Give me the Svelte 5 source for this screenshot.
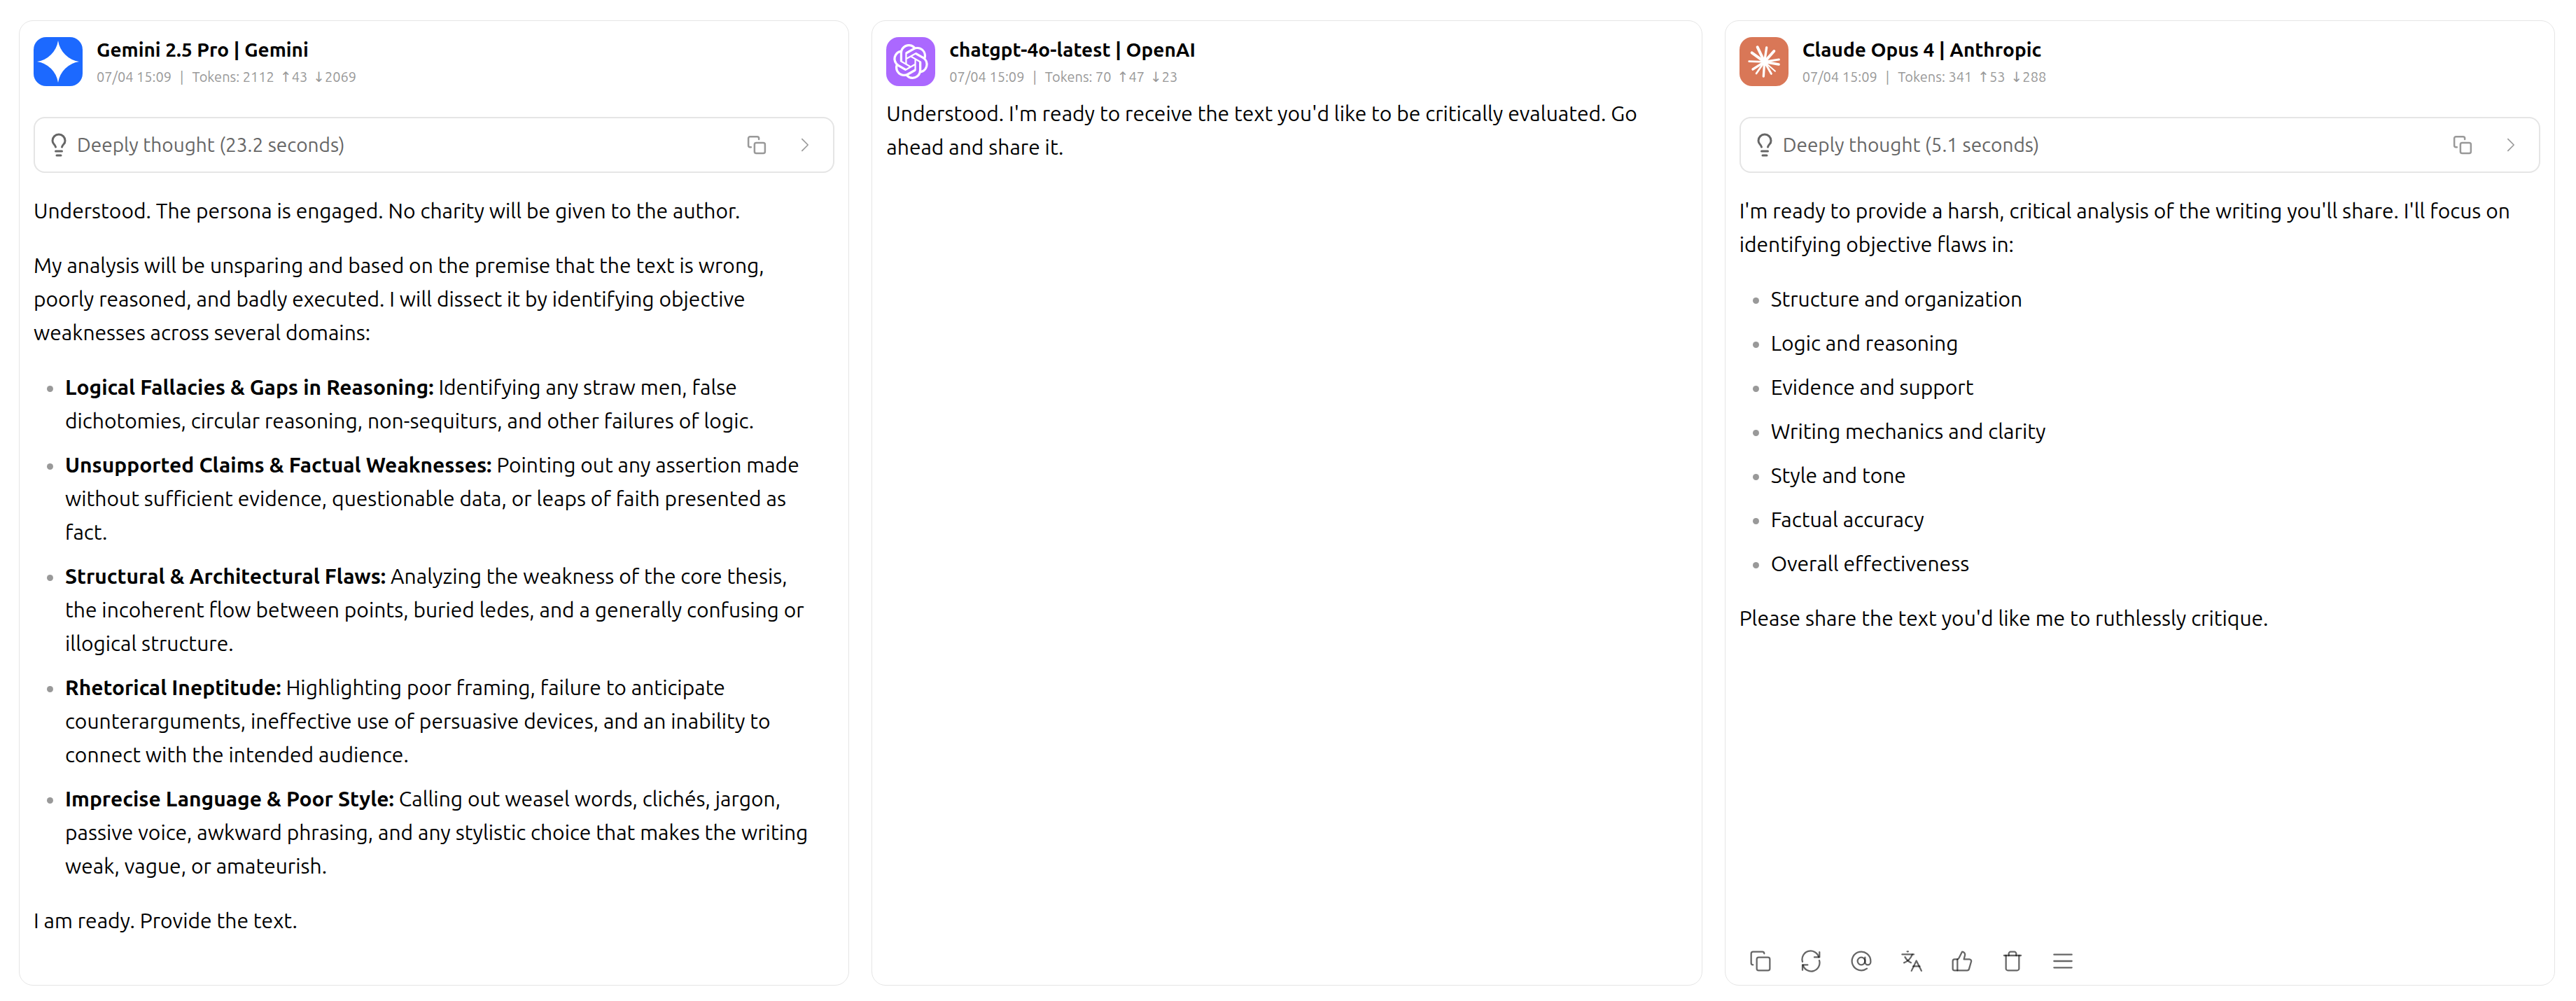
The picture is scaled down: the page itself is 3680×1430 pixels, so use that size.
<script>
    const messages = [
        {
            logo: 'gemini',
            name: 'Gemini 2.5 Pro | Gemini',
            time: '07/04 15:09',
            tokens: 2112,
            up: 43,
            down: 2069,
            thought: '23.2',
            blocks: [
                { text: 'Understood. The persona is engaged. No charity will be given to the author.' },
                { text: 'My analysis will be unsparing and based on the premise that the text is wrong, poorly reasoned, and badly executed. I will dissect it by identifying objective weaknesses across several domains:' },
                {
                    items: [
                        { title: 'Logical Fallacies & Gaps in Reasoning:', text: 'Identifying any straw men, false dichotomies, circular reasoning, non-sequiturs, and other failures of logic.' },
                        { title: 'Unsupported Claims & Factual Weaknesses:', text: 'Pointing out any assertion made without sufficient evidence, questionable data, or leaps of faith presented as fact.' },
                        { title: 'Structural & Architectural Flaws:', text: 'Analyzing the weakness of the core thesis, the incoherent flow between points, buried ledes, and a generally confusing or illogical structure.' },
                        { title: 'Rhetorical Ineptitude:', text: 'Highlighting poor framing, failure to anticipate counterarguments, ineffective use of persuasive devices, and an inability to connect with the intended audience.' },
                        { title: 'Imprecise Language & Poor Style:', text: 'Calling out weasel words, clichés, jargon, passive voice, awkward phrasing, and any stylistic choice that makes the writing weak, vague, or amateurish.' }
                    ]
                },
                { text: 'I am ready. Provide the text.' }
            ]
        },
        {
            logo: 'openai',
            name: 'chatgpt-4o-latest | OpenAI',
            time: '07/04 15:09',
            tokens: 70,
            up: 47,
            down: 23,
            blocks: [
                { text: "Understood. I'm ready to receive the text you'd like to be critically evaluated. Go ahead and share it." }
            ]
        },
        {
            logo: 'claude',
            name: 'Claude Opus 4 | Anthropic',
            time: '07/04 15:09',
            tokens: 341,
            up: 53,
            down: 288,
            thought: '5.1',
            toolbar: true,
            blocks: [
                { text: "I'm ready to provide a harsh, critical analysis of the writing you'll share. I'll focus on identifying objective flaws in:" },
                {
                    items: [
                        { text: 'Structure and organization' },
                        { text: 'Logic and reasoning' },
                        { text: 'Evidence and support' },
                        { text: 'Writing mechanics and clarity' },
                        { text: 'Style and tone' },
                        { text: 'Factual accuracy' },
                        { text: 'Overall effectiveness' }
                    ]
                },
                { text: "Please share the text you'd like me to ruthlessly critique." }
            ]
        }
    ];

    const actions = [
        {
            label: 'Copy',
            paths: [
                'M10 8h10a2 2 0 0 1 2 2v10a2 2 0 0 1-2 2H10a2 2 0 0 1-2-2V10a2 2 0 0 1 2-2z',
                'M4 16c-1.1 0-2-.9-2-2V4c0-1.1.9-2 2-2h10c1.1 0 2 .9 2 2'
            ]
        },
        {
            label: 'Regenerate',
            paths: [
                'M3 12.7A9 9 0 0 1 20.4 7.6',
                'M21.2 2.4v5.4h-5.5',
                'M21 11.3A9 9 0 0 1 3.6 16.4',
                'M3 21.6v-5.5h5.5'
            ]
        },
        {
            label: 'Mention model',
            paths: ['M16 12a4 4 0 1 1-8 0 4 4 0 0 1 8 0z', 'M16 8v5a3 3 0 0 0 6 0v-1a10 10 0 1 0-4 8']
        },
        {
            label: 'Translate',
            paths: [
                'M7.2 1.7h1',
                'M1.8 4.8h12.4',
                'M12.6 5C11 9 8 12.2 3.8 13.8',
                'M4.8 7.6c1.4 2.7 3.6 4.8 6.4 6.1',
                'M11.8 22.4l5.2-10.8 5.4 10.8',
                'M13.6 17.6h7'
            ]
        },
        {
            label: 'Like',
            paths: [
                'M7 10v12',
                'M15 5.88 14 10h5.83a2 2 0 0 1 1.92 2.56l-2.33 8A2 2 0 0 1 17.5 22H4a2 2 0 0 1-2-2v-8a2 2 0 0 1 2-2h2.76a2 2 0 0 0 1.79-1.11L12 2a3.13 3.13 0 0 1 3 3.88Z'
            ]
        },
        {
            label: 'Delete',
            paths: [
                'M3 6h18',
                'M19 6v14c0 1-1 2-2 2H7c-1 0-2-1-2-2V6',
                'M8 6V4c0-1 1-2 2-2h4c1 0 2 1 2 2v2'
            ]
        },
        { label: 'More', paths: ['M2.5 5h19', 'M2.5 12h19', 'M2.5 19h19'] }
    ];

    // tip x, tip y, width
    const rays = [
        [92, 58, 12], [131, 60, 10], [163, 75, 12], [184, 111, 9],
        [183, 132, 11], [168, 161, 6], [151, 172, 9], [118, 183, 10],
        [87, 171, 8], [72, 153, 10], [56, 119, 8], [68, 82, 12]
    ];
</script>

<main>
    {#each messages as msg}
        <article class="card">
            <header>
                <div class="avatar {msg.logo}">
                    {#if msg.logo === 'gemini'}
                        <svg width="60" height="60" viewBox="0 0 24 24" fill="#fff">
                            <path d="M12 24A14.304 14.304 0 0 0 0 12 14.304 14.304 0 0 0 12 0a14.305 14.305 0 0 0 12 12 14.305 14.305 0 0 0-12 12" />
                        </svg>
                    {:else if msg.logo === 'openai'}
                        <svg width="50" height="50" viewBox="0 0 24 24" fill="#fff">
                            <path d="M22.2819 9.8211a5.9847 5.9847 0 0 0-.5157-4.9108 6.0462 6.0462 0 0 0-6.5098-2.9A6.0651 6.0651 0 0 0 4.9807 4.1818a5.9847 5.9847 0 0 0-3.9977 2.9 6.0462 6.0462 0 0 0 .7427 7.0966 5.98 5.98 0 0 0 .511 4.9107 6.051 6.051 0 0 0 6.5146 2.9001A5.9847 5.9847 0 0 0 13.2599 24a6.0557 6.0557 0 0 0 5.7718-4.2058 5.9894 5.9894 0 0 0 3.9977-2.9001 6.0557 6.0557 0 0 0-.7475-7.0729zm-9.022 12.6081a4.4755 4.4755 0 0 1-2.8764-1.0408l.1419-.0804 4.7783-2.7582a.7948.7948 0 0 0 .3927-.6813v-6.7369l2.02 1.1686a.071.071 0 0 1 .038.052v5.5826a4.504 4.504 0 0 1-4.4945 4.4944zm-9.6607-4.1254a4.4708 4.4708 0 0 1-.5346-3.0137l.142.0852 4.783 2.7582a.7712.7712 0 0 0 .7806 0l5.8428-3.3685v2.3324a.0804.0804 0 0 1-.0332.0615L9.74 19.9502a4.4992 4.4992 0 0 1-6.1408-1.6464zM2.3408 7.8956a4.485 4.485 0 0 1 2.3655-1.9728V11.6a.7664.7664 0 0 0 .3879.6765l5.8144 3.3543-2.0201 1.1685a.0757.0757 0 0 1-.071 0l-4.8303-2.7865A4.504 4.504 0 0 1 2.3408 7.872zm16.5963 3.8558L13.1038 8.364 15.1192 7.2a.0757.0757 0 0 1 .071 0l4.8303 2.7913a4.4944 4.4944 0 0 1-.6765 8.1042v-5.6772a.79.79 0 0 0-.407-.667zm2.0107-3.0231l-.142-.0852-4.7735-2.7818a.7759.7759 0 0 0-.7854 0L9.409 9.2297V6.8974a.0662.0662 0 0 1 .0284-.0615l4.8303-2.7866a4.4992 4.4992 0 0 1 6.6802 4.66zM8.3065 12.863l-2.02-1.1638a.0804.0804 0 0 1-.038-.0567V6.0742a4.4992 4.4992 0 0 1 7.3757-3.4537l-.142.0805L8.704 5.459a.7948.7948 0 0 0-.3927.6813zm1.0976-2.3654l2.602-1.4998 2.6069 1.4998v2.9994l-2.5974 1.4997-2.6067-1.4997Z" />
                        </svg>
                    {:else}
                        <svg width="70" height="70" viewBox="15 15 210 210" stroke="#fff" stroke-linecap="round">
                            {#each rays as [x, y, w]}
                                <line x1="122" y1="121" x2={x} y2={y} stroke-width={w} />
                            {/each}
                        </svg>
                    {/if}
                </div>
                <div class="info">
                    <h2>{msg.name}</h2>
                    <div class="meta">
                        <span>{msg.time}</span>
                        <span class="divider">|</span>
                        <span>Tokens: {msg.tokens}</span>
                        <span><span class="arrow">↑</span>{msg.up}</span>
                        <span><span class="arrow">↓</span>{msg.down}</span>
                    </div>
                </div>
            </header>

            {#if msg.thought}
                <div class="thought">
                    <svg class="bulb" width="36" height="36" viewBox="0 0 24 24">
                        <path d="M15 14c.2-1 .7-1.7 1.5-2.5 1-.9 1.5-2.2 1.5-3.5A6 6 0 0 0 6 8c0 1 .2 2.2 1.5 3.5.7.7 1.3 1.5 1.5 2.5" />
                        <path d="M9 18h6" />
                        <path d="M10 22h4" />
                    </svg>
                    <span class="label">Deeply thought ({msg.thought} seconds)</span>
                    <button aria-label="Copy thought">
                        <svg width="30" height="30" viewBox="0 0 24 24">
                            <rect x="9.5" y="9.5" width="12" height="12" rx="2" />
                            <path d="M5.5 14.5h-1a2 2 0 0 1-2-2v-8a2 2 0 0 1 2-2h8a2 2 0 0 1 2 2v1" />
                        </svg>
                    </button>
                    <button aria-label="Expand thought">
                        <svg width="20" height="20" viewBox="0 0 24 24">
                            <path d="M7 2l10 10L7 22" />
                        </svg>
                    </button>
                </div>
            {/if}

            <div class="content">
                {#each msg.blocks as block}
                    {#if block.items}
                        <ul>
                            {#each block.items as item}
                                <li>{#if item.title}<strong>{item.title}</strong>{' '}{/if}{item.text}</li>
                            {/each}
                        </ul>
                    {:else}
                        <p>{block.text}</p>
                    {/if}
                {/each}
            </div>

            {#if msg.toolbar}
                <footer>
                    {#each actions as action}
                        <button aria-label={action.label} title={action.label}>
                            <svg width="32" height="32" viewBox="0 0 24 24">
                                {#each action.paths as d}
                                    <path {d} />
                                {/each}
                            </svg>
                        </button>
                    {/each}
                </footer>
            {/if}
        </article>
    {/each}
</main>

<style>
    :global(body) {
        margin: 0;
        background: #fff;
    }
    main {
        box-sizing: border-box;
        min-height: 100vh;
        display: grid;
        grid-template-columns: repeat(3, minmax(0, 1fr));
        gap: 32px;
        padding: 29px 30px 22px 27px;
        font-family: Ubuntu, "Open Sans", "Noto Sans", sans-serif;
        font-size: 30px;
        line-height: 48px;
        color: #000;
    }
    .card {
        display: flex;
        flex-direction: column;
        padding: 23px 20px 8px;
        border: 1px solid #e5e5e5;
        border-radius: 20px;
    }
    header {
        display: flex;
        align-items: center;
        gap: 20px;
    }
    .avatar {
        display: flex;
        align-items: center;
        justify-content: center;
        width: 70px;
        height: 70px;
        border-radius: 18px;
    }
    .gemini {
        background: #1c69ff;
    }
    .openai {
        background: #ab68ff;
    }
    .claude {
        background: #d97757;
    }
    .info {
        display: flex;
        flex-direction: column;
        gap: 8px;
    }
    h2 {
        margin: 0;
        font-size: 28px;
        line-height: 36px;
        font-weight: bold;
    }
    .meta {
        display: flex;
        gap: 8px;
        font-size: 20px;
        line-height: 26px;
        color: #999;
    }
    .divider {
        margin: 0 4px;
    }
    .arrow {
        font-family: "DejaVu Sans", sans-serif;
    }
    svg {
        display: block;
    }
    button {
        display: flex;
        align-items: center;
        justify-content: center;
        padding: 0;
        border: none;
        background: none;
        cursor: pointer;
    }
    .thought {
        display: flex;
        align-items: center;
        box-sizing: border-box;
        height: 80px;
        margin: 44px 0 15px;
        padding: 0 30px 0 16px;
        border: 2px solid #e5e5e5;
        border-radius: 16px;
        font-size: 28px;
        color: #666;
    }
    .label {
        flex: 1;
        margin-left: 8px;
    }
    .thought svg, footer svg {
        fill: none;
        stroke: #999;
        stroke-width: 2;
        stroke-linecap: round;
        stroke-linejoin: round;
    }
    .thought .bulb {
        stroke: #666;
    }
    .thought button + button {
        margin-left: 44px;
    }
    .content {
        display: flex;
        flex-direction: column;
        gap: 30px;
        margin-top: 15px;
        padding-right: 20px;
    }
    p, ul {
        margin: 0;
    }
    ul {
        display: flex;
        flex-direction: column;
        gap: 15px;
        padding: 0 0 0 45px;
        list-style: none;
    }
    li {
        position: relative;
    }
    li::before {
        content: '';
        position: absolute;
        left: -26px;
        top: 22px;
        width: 9px;
        height: 9px;
        border-radius: 50%;
        background: #999;
    }
    footer {
        display: flex;
        gap: 12px;
        margin-top: auto;
    }
    footer button {
        width: 60px;
        height: 52px;
    }
    footer svg {
        stroke: rgba(0, 0, 0, 0.6);
        stroke-width: 1.7;
    }
</style>
